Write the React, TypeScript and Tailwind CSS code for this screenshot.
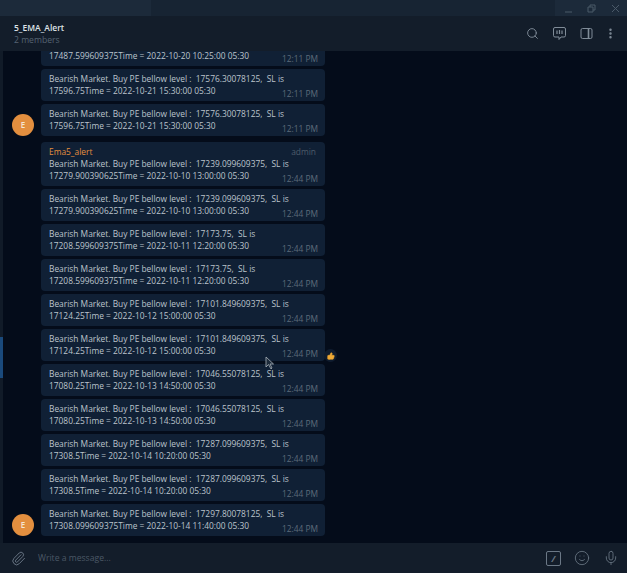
import { Mic, MoreVertical, Paperclip, Search, Smile, ThumbsUp } from "lucide-react";

type Msg = { first: string; second: string; time: string; sender?: boolean; avatar?: boolean; like?: boolean };

const msgs: Msg[] = [
  { first: "Bearish Market. Buy PE bellow level :  17460.19921875,  SL is", second: "17487.599609375Time = 2022-10-20 10:25:00 05:30", time: "12:11 PM" },
  { first: "Bearish Market. Buy PE bellow level :  17576.30078125,  SL is", second: "17596.75Time = 2022-10-21 15:30:00 05:30", time: "12:11 PM" },
  { first: "Bearish Market. Buy PE bellow level :  17576.30078125,  SL is", second: "17596.75Time = 2022-10-21 15:30:00 05:30", time: "12:11 PM", avatar: true },
  { first: "Bearish Market. Buy PE bellow level :  17239.099609375,  SL is", second: "17279.900390625Time = 2022-10-10 13:00:00 05:30", time: "12:44 PM", sender: true },
  { first: "Bearish Market. Buy PE bellow level :  17239.099609375,  SL is", second: "17279.900390625Time = 2022-10-10 13:00:00 05:30", time: "12:44 PM" },
  { first: "Bearish Market. Buy PE bellow level :  17173.75,  SL is", second: "17208.599609375Time = 2022-10-11 12:20:00 05:30", time: "12:44 PM" },
  { first: "Bearish Market. Buy PE bellow level :  17173.75,  SL is", second: "17208.599609375Time = 2022-10-11 12:20:00 05:30", time: "12:44 PM" },
  { first: "Bearish Market. Buy PE bellow level :  17101.849609375,  SL is", second: "17124.25Time = 2022-10-12 15:00:00 05:30", time: "12:44 PM" },
  { first: "Bearish Market. Buy PE bellow level :  17101.849609375,  SL is", second: "17124.25Time = 2022-10-12 15:00:00 05:30", time: "12:44 PM", like: true },
  { first: "Bearish Market. Buy PE bellow level :  17046.55078125,  SL is", second: "17080.25Time = 2022-10-13 14:50:00 05:30", time: "12:44 PM" },
  { first: "Bearish Market. Buy PE bellow level :  17046.55078125,  SL is", second: "17080.25Time = 2022-10-13 14:50:00 05:30", time: "12:44 PM" },
  { first: "Bearish Market. Buy PE bellow level :  17287.099609375,  SL is", second: "17308.5Time = 2022-10-14 10:20:00 05:30", time: "12:44 PM" },
  { first: "Bearish Market. Buy PE bellow level :  17287.099609375,  SL is", second: "17308.5Time = 2022-10-14 10:20:00 05:30", time: "12:44 PM" },
  { first: "Bearish Market. Buy PE bellow level :  17297.80078125,  SL is", second: "17308.099609375Time = 2022-10-14 11:40:00 05:30", time: "12:44 PM", avatar: true },
];

function Bubble({ m }: { m: Msg }) {
  return (
    <div className={`flex items-end ${m.sender ? "mt-[6px]" : "mt-[3px]"}`}>
      <div className="w-[37px] shrink-0 pl-[8px]">
        {m.avatar && (
          <div className="flex h-[22px] w-[22px] items-center justify-center rounded-full bg-[#e38f3f] text-[8px] font-semibold text-[#f6e6d4]">
            E
          </div>
        )}
      </div>
      <div className="relative w-[284px] rounded-[4px] bg-[#102035] px-[8px] pb-[4px] pt-[4px] text-[8.4px] leading-[12px] text-[#bcc4cc]">
        {m.sender && (
          <div className="flex justify-between pr-[1px] text-[#e38f3f]">
            <span className="font-medium">Ema5_alert</span>
            <span className="text-[#4e5c6b]">admin</span>
          </div>
        )}
        <div className="whitespace-pre">{m.first}</div>
        <div className="whitespace-pre">{m.second}</div>
        <span className="absolute bottom-[1px] right-[7px] text-[8.4px] leading-[12px] text-[#5d6b7a]">{m.time}</span>
        {m.like && (
          <span className="absolute bottom-[-1px] left-[283px] flex h-[13px] w-[13px] items-center justify-center rounded-full bg-[#0f1c2e]">
            <ThumbsUp size={8} strokeWidth={1.5} className="fill-[#f0aa35] text-[#f0aa35]" />
          </span>
        )}
      </div>
    </div>
  );
}

function PollIcon() {
  return (
    <svg width="15" height="15" viewBox="0 0 15 15" fill="none" stroke="currentColor" strokeWidth="1">
      <path d="M3 1.5h9a1.5 1.5 0 0 1 1.5 1.5v6.5a1.5 1.5 0 0 1-1.5 1.5h-3l-2 2.5v-2.5H3a1.5 1.5 0 0 1-1.5-1.5V3A1.5 1.5 0 0 1 3 1.5z" />
      <path d="M5 4.5v3.5M7.5 4v4M10 4.5v3.5" strokeWidth="1.2" />
    </svg>
  );
}

function SidebarIcon() {
  return (
    <svg width="13" height="13" viewBox="0 0 13 13" fill="none" stroke="currentColor" strokeWidth="1">
      <rect x="1" y="1.5" width="11" height="10" rx="1.5" />
      <path d="M8.5 1.5v10" strokeWidth="1.6" />
    </svg>
  );
}

export default function App() {
  return (
    <div className="flex h-[573px] w-[627px] flex-col overflow-hidden bg-[#040c1a] font-['Open_Sans',sans-serif]">
      <div className="flex h-[16px] shrink-0 bg-[#172433]">
        <div className="w-[151px] bg-[#1c2a3a]" />
        <div className="flex-1" />
        <div className="flex w-[72px] items-center justify-around bg-[#1c2a3a] pl-[2px] text-[#4b5a69]">
          <svg width="9" height="9" viewBox="0 0 9 9" stroke="currentColor" fill="none"><path d="M1 8h7" /></svg>
          <svg width="9" height="9" viewBox="0 0 9 9" stroke="currentColor" fill="none"><path d="M1 3h5v5H1zM3 3V1h5v5H6" /></svg>
          <svg width="9" height="9" viewBox="0 0 9 9" stroke="currentColor" fill="none"><path d="M1 1l7 7M8 1L1 8" /></svg>
        </div>
      </div>
      <header className="flex h-[35px] shrink-0 items-center justify-between bg-[#131d2a] pl-[14px] pr-[10px]">
        <div>
          <div className="text-[8.5px] font-semibold leading-[13px] text-[#dfe3e8]">5_EMA_Alert</div>
          <div className="text-[8.6px] leading-[13px] text-[#566473]">2 members</div>
        </div>
        <div className="flex items-center gap-[13px] text-[#808c98]">
          <Search size={13} strokeWidth={1.75} />
          <PollIcon />
          <SidebarIcon />
          <MoreVertical size={13} strokeWidth={2.5} className="-ml-[2px]" />
        </div>
      </header>
      <div className="relative flex min-h-0 flex-1">
        <div className="flex w-[3px] shrink-0 flex-col bg-[#111b28]">
          <div className="mt-[286px] h-[41px] bg-[#1a4a7c]" />
        </div>
        <div className="flex min-h-0 flex-1 flex-col justify-end overflow-hidden pb-[7px] pl-[1px]">
          {msgs.map((m, i) => (
            <Bubble key={i} m={m} />
          ))}
        </div>
      </div>
      <footer className="flex h-[30px] shrink-0 items-center bg-[#131d2a] pl-[11px] pr-[8px] text-[#6b7886]">
        <Paperclip size={15} strokeWidth={1.5} />
        <div className="ml-[12px] flex-1 text-[8.6px] text-[#4b5866]">Write a message...</div>
        <div className="flex items-center gap-[13px]">
          <div className="flex h-[15px] w-[15px] items-center justify-center rounded-[2px] border border-[#6b7886] text-[9px] font-bold italic leading-none">/</div>
          <Smile size={16} strokeWidth={1.25} />
          <Mic size={16} strokeWidth={1.25} />
        </div>
      </footer>
      <svg className="pointer-events-none absolute left-[265px] top-[356px]" width="10" height="14" viewBox="0 0 10 14">
        <path d="M1 1v10l2.5-2.5L6 13l1-1-2-4h3.5z" fill="#1c2a3a" stroke="#aab2ba" strokeWidth="0.8" />
      </svg>
    </div>
  );
}
